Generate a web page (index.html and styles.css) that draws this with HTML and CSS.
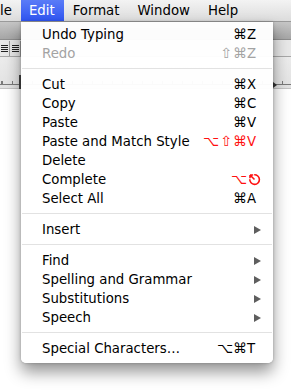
FILE: index.html
```html
<!DOCTYPE html>
<html lang="en">
<head>
    <meta charset="UTF-8">
    <meta name="viewport" content="width=device-width, initial-scale=1.0">
    <title>Edit menu</title>
    <link rel="stylesheet" href="styles.css">
</head>
<body>
    <div class="screen">
        <div class="menubar">
            <span class="menubar-item first">le</span>
            <span class="menubar-item active">Edit</span>
            <span class="menubar-item">Format</span>
            <span class="menubar-item">Window</span>
            <span class="menubar-item">Help</span>
        </div>

        <!-- the document window behind the menu -->
        <div class="window">
            <div class="toolbar"></div>
            <div class="formatbar">
                <span class="fmt-btn right"></span>
                <span class="fmt-btn justify"></span>
            </div>
            <div class="ruler">
                <div class="ruler-scale"></div>
                <span class="indent"></span>
                <span class="tab-marker"></span>
            </div>
            <div class="page"></div>
        </div>

        <div class="menu">
            <div class="item"><span class="label">Undo Typing</span><span class="mod">⌘</span><span class="key">Z</span></div>
            <div class="item disabled"><span class="label">Redo</span><span class="mod">⇧</span><span class="mod">⌘</span><span class="key">Z</span></div>
            <div class="sep"></div>
            <div class="item"><span class="label">Cut</span><span class="mod">⌘</span><span class="key">X</span></div>
            <div class="item"><span class="label">Copy</span><span class="mod">⌘</span><span class="key">C</span></div>
            <div class="item"><span class="label">Paste</span><span class="mod">⌘</span><span class="key">V</span></div>
            <div class="item conflict"><span class="label">Paste and Match Style</span><span class="mod opt">⌥</span><span class="mod">⇧</span><span class="mod">⌘</span><span class="key">V</span></div>
            <div class="item"><span class="label">Delete</span></div>
            <div class="item conflict">
                <span class="label">Complete</span><span class="mod opt">⌥</span>
                <span class="key">
                    <svg class="esc" width="13" height="13" viewBox="0 0 13 13" aria-label="Escape">
                        <path d="M6.2 1.8 A4.8 4.8 0 1 1 1.8 6.2" fill="none" stroke="#ff1010" stroke-width="1.6"/>
                        <path d="M6.5 6.5 L2 2 M2 2 L2 5.2 M2 2 L5.2 2" fill="none" stroke="#ff1010" stroke-width="1.6"/>
                    </svg>
                </span>
            </div>
            <div class="item"><span class="label">Select All</span><span class="mod">⌘</span><span class="key">A</span></div>
            <div class="sep"></div>
            <div class="item"><span class="label">Insert</span><span class="key"><span class="arrow"></span></span></div>
            <div class="sep"></div>
            <div class="item"><span class="label">Find</span><span class="key"><span class="arrow"></span></span></div>
            <div class="item"><span class="label">Spelling and Grammar</span><span class="key"><span class="arrow"></span></span></div>
            <div class="item"><span class="label">Substitutions</span><span class="key"><span class="arrow"></span></span></div>
            <div class="item"><span class="label">Speech</span><span class="key"><span class="arrow"></span></span></div>
            <div class="sep"></div>
            <div class="item"><span class="label">Special Characters…</span><span class="mod opt">⌥</span><span class="mod">⌘</span><span class="key">T</span></div>
        </div>
    </div>
</body>
</html>
```

FILE: styles.css
```css
* {
    margin: 0;
    padding: 0;
    box-sizing: border-box;
}

body {
    background: #ffffff;
    font-family: 'DejaVu Sans', 'Liberation Sans', sans-serif;
    font-size: 13.3px;
    color: #000000;
    overflow: hidden;
}

.screen {
    position: relative;
    width: 291px;
    height: 391px;
    overflow: hidden;
}

/* Menu bar */
.menubar {
    display: flex;
    height: 22px;
    background: linear-gradient(#f3f3f3, #dcdcdc);
    border-bottom: 1px solid #9a9a9a;
}

.menubar-item {
    padding: 0 9px;
    line-height: 21px;
    height: 21px;
}

.menubar-item.first {
    margin-left: -9px;
}

.menubar-item.active {
    background: linear-gradient(#5a7cf7, #2f55f2);
    color: #ffffff;
    padding: 0 9px 0 8px;
}

/* Window behind */
.window {
    display: flex;
    flex-direction: column;
}

.toolbar {
    height: 18px;
    background: linear-gradient(#c6c6c6, #a6a6a6);
    border-bottom: 1px solid #8e8e8e;
}

.formatbar {
    display: flex;
    height: 17px;
    background: #e8e8e8;
    border-bottom: 1px solid #a8a8a8;
    padding-top: 1px;
}

.fmt-btn {
    width: 11px;
    height: 15px;
    border-right: 1px solid #9c9c9c;
    background-repeat: no-repeat;
    background-position: 2px 4px;
    background-size: 7px 7px;
}

.fmt-btn.right {
    width: 10px;
    background-image: repeating-linear-gradient(#222 0 1px, transparent 1px 2px);
    background-position: 1px 4px;
}

.fmt-btn.justify {
    background-image: repeating-linear-gradient(#222 0 1px, transparent 1px 2px);
}

.ruler {
    position: relative;
    height: 32px;
    background: linear-gradient(#ececec, #e2e2e2);
    border-bottom: 1px solid #c4c4c4;
    padding-top: 24px;
}

.ruler-scale {
    height: 4px;
    border-bottom: 1px solid #7a7a7a;
    background: repeating-linear-gradient(90deg, #7a7a7a 0 1px, transparent 1px 10px);
    background-position: 2px 0;
}

.indent {
    position: absolute;
    left: 19px;
    top: 18px;
    width: 2px;
    height: 14px;
    background: #444;
}

.tab-marker {
    position: absolute;
    left: 273px;
    top: 25px;
    border-left: 4px solid #333;
    border-top: 3px solid transparent;
    border-bottom: 3px solid transparent;
}

.page {
    flex: 1;
    height: 300px;
    background: #ffffff;
}

/* Edit menu */
.menu {
    position: absolute;
    top: 22px;
    left: 21px;
    width: 252px;
    padding: 3px 11px 5px 21px;
    background: rgba(255, 255, 255, 0.96);
    border-radius: 0 0 5px 5px;
    box-shadow: 0 9px 16px rgba(0, 0, 0, 0.42), 0 0 3px rgba(0, 0, 0, 0.25);
}

.item {
    display: flex;
    align-items: center;
    height: 19px;
    line-height: 19px;
    white-space: nowrap;
}

.label {
    flex: 1;
}

/* one fixed slot per modifier glyph, like the native key-equivalent columns */
.mod {
    width: 14px;
    text-align: center;
    font-size: 14px;
}

.mod.opt {
    width: 16px;
}

.key {
    display: flex;
    align-items: center;
    justify-content: flex-start;
    width: 15px;
}

.esc {
    display: block;
    margin-left: 1px;
}

.item.disabled {
    color: #a3a3a3;
}

.item.conflict .mod,
.item.conflict .key {
    color: #ff1010;
}

.arrow {
    margin-left: 7px;
    border-left: 7px solid #5e5e5e;
    border-top: 4.5px solid transparent;
    border-bottom: 4.5px solid transparent;
}

.sep {
    height: 12px;
    margin: 0 -10px 0 -20px;
    padding-top: 5px;
}

.sep::after {
    content: '';
    display: block;
    height: 1px;
    background: #e2e2e2;
}
```
